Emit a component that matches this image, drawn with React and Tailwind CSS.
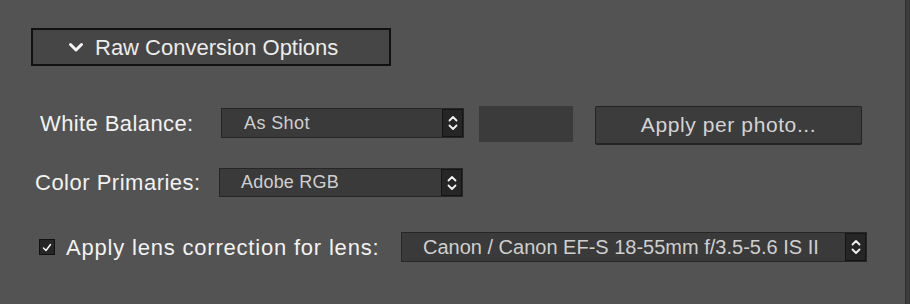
const Stepper = () => (
    <div className="w-[21px] self-stretch bg-[#262626] border border-[#151515] flex items-center justify-center">
        <svg width="10" height="16" viewBox="0 0 10 16" fill="none" stroke="#f2f2f2" strokeWidth="1.8" strokeLinecap="round" strokeLinejoin="round">
            <path d="M1.5 5.5 L5 2 L8.5 5.5" />
            <path d="M1.5 10.5 L5 14 L8.5 10.5" />
        </svg>
    </div>
);

const Dropdown = ({ label, className, textClass }) => (
    <div className={`flex bg-[#3a3a3a] border border-[#262626] ${className}`}>
        <div className={`flex-1 flex items-center text-[#cfcfcf] ${textClass}`}>{label}</div>
        <Stepper />
    </div>
);

const App = () => {
    return (
        <div className="w-[910px] h-[304px] bg-[#535353] flex overflow-hidden" style={{ fontFamily: '"Liberation Sans", Arial, sans-serif' }}>
            <div className="flex-1 flex flex-col">
                {/* Section header */}
                <div className="mt-[28px] ml-[31px] w-[360px] h-[38px] bg-[#464646] border-2 border-[#111] flex items-center">
                    <svg className="ml-[35px]" width="16" height="11" viewBox="0 0 16 11" fill="none" stroke="#f4f4f4" strokeWidth="3" strokeLinecap="round" strokeLinejoin="round">
                        <path d="M2.5 2.5 L8 8 L13.5 2.5" />
                    </svg>
                    <span className="ml-[11px] text-[22px] text-[#ececec]">Raw Conversion Options</span>
                </div>

                {/* White balance */}
                <div className="mt-[40px] flex items-start h-[39px]">
                    <span className="mt-[2px] ml-[40px] w-[181px] h-[30px] flex items-center text-[22px] tracking-[0.4px] text-[#f2f2f2]">White Balance:</span>
                    <Dropdown label="As Shot" className="mt-[2px] w-[243px] h-[30px]" textClass="pl-[22px] text-[18px] tracking-[0.4px]" />
                    <div className="ml-[15px] w-[94px] h-[36px] bg-[#3b3b3b]" />
                    <button className="ml-[22px] w-[267px] h-[39px] bg-[#3c3c3c] border border-[#232323] border-b-2 rounded-[2px] text-[21px] tracking-[0.6px] text-[#d4d4d4]">
                        Apply per photo...
                    </button>
                </div>

                {/* Color primaries */}
                <div className="mt-[23px] flex items-center h-[29px]">
                    <span className="ml-[35px] w-[184px] text-[22px] tracking-[0.5px] text-[#f2f2f2]">Color Primaries:</span>
                    <Dropdown label="Adobe RGB" className="w-[244px] h-[29px]" textClass="pl-[21px] text-[18px] tracking-[0.2px]" />
                </div>

                {/* Lens correction */}
                <div className="mt-[35px] flex items-center h-[30px]">
                    <div className="ml-[39px] w-[16px] h-[16px] bg-[#262626] border border-[#111] flex items-center justify-center">
                        <svg width="10" height="9" viewBox="0 0 10 9" fill="none" stroke="#f4f4f4" strokeWidth="1.5" strokeLinecap="round" strokeLinejoin="round">
                            <path d="M1.5 5 L4 7.5 L8.5 1.5" />
                        </svg>
                    </div>
                    <span className="ml-[11px] w-[335px] text-[22px] tracking-[0.8px] text-[#f2f2f2]">Apply lens correction for lens:</span>
                    <Dropdown label="Canon / Canon EF-S 18-55mm f/3.5-5.6 IS II" className="w-[466px] h-[30px]" textClass="pl-[21px] text-[20px]" />
                </div>
            </div>
            <div className="w-[5px] bg-[#3b3b3b] border-l border-[#303030]" />
        </div>
    );
};

export default App;
